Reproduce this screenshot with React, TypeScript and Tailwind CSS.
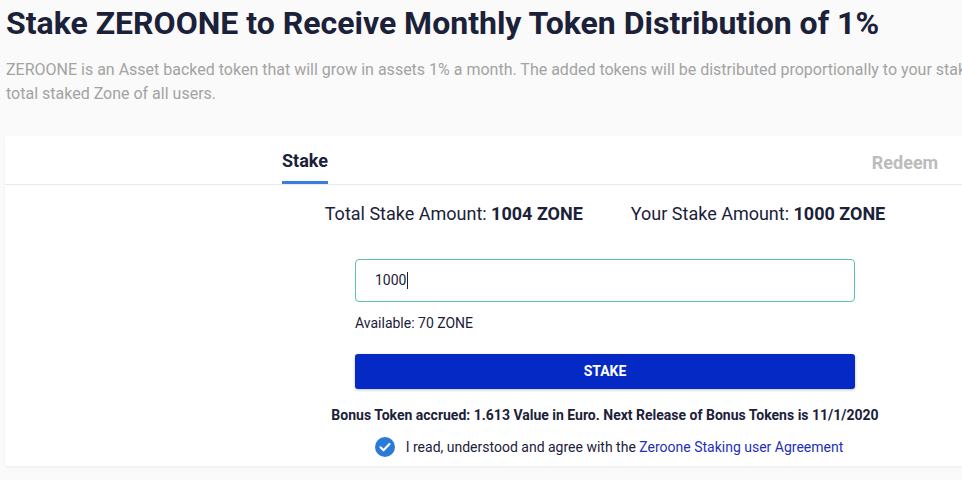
export default function App() {
  return (
    <div className="w-[962px] h-[480px] overflow-hidden bg-[#fafafa] font-['Roboto',sans-serif]">
      <div className="w-[1220px] pl-[5px]">
        <h1 className="pl-px pt-[3px] text-[32px] leading-[40px] font-bold text-[#1b2139]">
          Stake ZEROONE to Receive Monthly Token Distribution of 1%
        </h1>
        <p className="mt-[15px] pl-px text-[16px] leading-[24px] text-[#a3a3a3]">
          ZEROONE is an Asset backed token that will grow in assets 1% a month. The added tokens will be distributed proportionally to your staked
          <br />
          total staked Zone of all users.
        </p>

        <div className="mt-[30px] w-[1200px] rounded-[4px] bg-white shadow-[0_1px_3px_rgba(0,0,0,0.06)]">
          <div className="grid grid-cols-2 border-b border-[#e6ebf2]">
            <div className="flex justify-center">
              <div className="flex h-[48px] items-center border-b-[3px] border-[#3b7ddd] pt-[4px] text-[18px] font-bold text-[#1b2139]">
                Stake
              </div>
            </div>
            <div className="flex justify-center">
              <div className="flex h-[48px] items-center pt-[4px] text-[18px] font-bold text-[#bcbcbc]">
                Redeem
              </div>
            </div>
          </div>

          <div className="flex flex-col items-center pt-[17px] pb-[9px]">
            <div className="flex gap-[48px] text-[18px] leading-[24px] text-[#1b2139]">
              <span>
                Total Stake Amount: <b>1004 ZONE</b>
              </span>
              <span>
                Your Stake Amount: <b>1000 ZONE</b>
              </span>
            </div>

            <div className="mt-[33px] w-[500px]">
              <div className="flex h-[43px] items-center rounded-[4px] border border-[#5bc4a5] px-[19px] text-[14px] text-[#1b2139]">
                1000
                <span className="ml-px h-[17px] w-px bg-[#1b2139]" />
              </div>
              <div className="mt-[11px] text-[14px] leading-[20px] text-[#1b2139]">Available: 70 ZONE</div>
              <button className="mt-[21px] flex h-[35px] w-full items-center justify-center rounded-[3px] bg-[#0529c4] text-[14px] font-bold text-white shadow-[0_1px_3px_rgba(0,0,0,0.25)]">
                STAKE
              </button>
            </div>

            <div className="mt-[16px] text-[14px] leading-[20px] font-bold text-[#1b2139]">
              Bonus Token accrued: 1.613 Value in Euro. Next Release of Bonus Tokens is 11/1/2020
            </div>

            <div className="mt-[12px] ml-[8px] flex items-center gap-[11px] text-[14px] leading-[20px] text-[#1b2139]">
              <svg width="20" height="20" viewBox="0 0 20 20">
                <circle cx="10" cy="10" r="10" fill="#2a7bd8" />
                <path d="M5.5 10.3l3 3 6-6.2" fill="none" stroke="#fff" strokeWidth="2.2" strokeLinecap="round" strokeLinejoin="round" />
              </svg>
              <span>
                I read, understood and agree with the <span className="text-[#1d31b8]">Zeroone Staking user Agreement</span>
              </span>
            </div>
          </div>
        </div>
      </div>
    </div>
  )
}
